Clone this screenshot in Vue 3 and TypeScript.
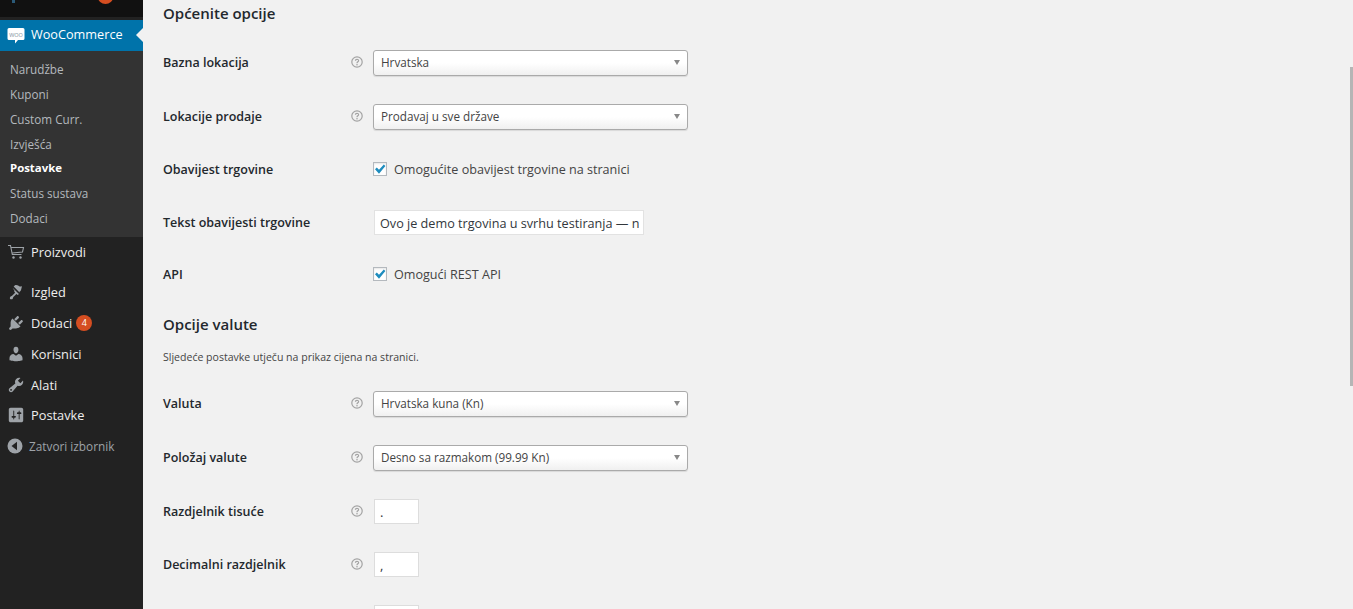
<script setup lang="ts">
interface SubItem {
  label: string;
  current?: boolean;
}

interface FieldRow {
  label: string;
  kind: 'select' | 'check' | 'text' | 'small';
  value: string;
  help?: boolean;
  height: number;
}

const subItems: SubItem[] = [
  { label: 'Narudžbe' },
  { label: 'Kuponi' },
  { label: 'Custom Curr.' },
  { label: 'Izvješća' },
  { label: 'Postavke', current: true },
  { label: 'Status sustava' },
  { label: 'Dodaci' },
];

const generalRows: FieldRow[] = [
  { label: 'Bazna lokacija', kind: 'select', value: 'Hrvatska', help: true, height: 54 },
  { label: 'Lokacije prodaje', kind: 'select', value: 'Prodavaj u sve države', help: true, height: 53 },
  { label: 'Obavijest trgovine', kind: 'check', value: 'Omogućite obavijest trgovine na stranici', height: 53 },
  { label: 'Tekst obavijesti trgovine', kind: 'text', value: 'Ovo je demo trgovina u svrhu testiranja — narudžbe neće biti izvršene.', height: 52 },
  { label: 'API', kind: 'check', value: 'Omogući REST API', height: 50 },
];

const currencyRows: FieldRow[] = [
  { label: 'Valuta', kind: 'select', value: 'Hrvatska kuna (Kn)', help: true, height: 54 },
  { label: 'Položaj valute', kind: 'select', value: 'Desno sa razmakom (99.99 Kn)', help: true, height: 54 },
  { label: 'Razdjelnik tisuće', kind: 'small', value: '.', help: true, height: 53 },
  { label: 'Decimalni razdjelnik', kind: 'small', value: ',', help: true, height: 53 },
  { label: '', kind: 'small', value: '', height: 53 },
];
</script>

<template>
  <div class="page">
    <aside class="sidebar">
      <div class="top-stub">
        <span class="stub-mark"></span>
        <span class="stub-badge"></span>
      </div>
      <div class="woo-item">
        <svg class="woo-logo" width="18" height="18" viewBox="0 0 18 18">
          <path fill="#fff" d="M2 1h14a1.500 1.500 0 0 1 1.500 1.500v9a1.500 1.500 0 0 1-1.500 1.500h-5l-3 3.500v-3.500H2a1.500 1.500 0 0 1-1.500-1.500v-9A1.500 1.500 0 0 1 2 1z" />
          <text x="9" y="9.500" text-anchor="middle" font-size="5.500" fill="#7d8f9c" font-family="'Open Sans', sans-serif">WOO</text>
        </svg>
        <span class="woo-label">WooCommerce</span>
        <span class="woo-arrow"></span>
      </div>
      <ul class="submenu">
        <li v-for="item in subItems" :key="item.label" :class="{ current: item.current }">{{ item.label }}</li>
      </ul>

      <div class="menu-item products">
        <svg class="menu-icon" width="18" height="18" viewBox="0 0 18 18">
          <path fill="none" stroke="#9ea3a8" stroke-width="1.100" d="M1 2.500h2.500l1.800 9h9.200M4 4.500h12.500l-1 4.500-10.300 1" />
          <circle cx="6.500" cy="14.500" r="1.200" fill="#9ea3a8" />
          <circle cx="13.500" cy="14.500" r="1.200" fill="#9ea3a8" />
        </svg>
        <span>Proizvodi</span>
      </div>

      <div class="menu-group">
        <div class="menu-item">
          <svg class="menu-icon" width="18" height="18" viewBox="0 0 20 20">
            <path fill="#9ea3a8" d="M14.480 11.060L7.410 3.990l1.500-1.500c.5-.56 2.300-.47 3.510.32 1.210.8 1.430 1.280 2.660 1.150 1.240-.12 1.590-.26 1.590-.26L15.590 7.700c-.03.22-.57 1.130-1.410 1.880-.83.760-.35 1.480.3 1.480zM6.210 5.190l7.070 7.070-.65.65c-.39.39-1.020.39-1.410 0l-.72-.72-3.480 3.400-.8 2.100c-.4.4-2 .6-2.800.2-.4-.4-.2-2.200.2-2.600l2-1 3.400-3.480-.71-.71c-.39-.39-.39-1.020 0-1.410z" />
          </svg>
          <span>Izgled</span>
        </div>
        <div class="menu-item">
          <svg class="menu-icon" width="18" height="18" viewBox="0 0 20 20">
            <path fill="#9ea3a8" d="M13.110 4.360L9.870 7.600 8 5.730l3.240-3.240c.35-.34 1.050-.2 1.560.32.520.51.660 1.210.31 1.550zm-8 1.770l.91-1.120 9.010 9.010-1.190.84c-.71.710-2.630 1.160-3.820 1.160H6.140L4.900 17.260c-.59.590-1.540.59-2.120 0-.59-.58-.59-1.530 0-2.120l1.240-1.240v-3.880c0-1.130.4-3.020 1.090-3.890zm7.260 3.970l3.240-3.240c.34-.35 1.040-.21 1.550.31.520.51.660 1.210.31 1.550l-3.240 3.250z" />
          </svg>
          <span>Dodaci</span>
          <span class="badge">4</span>
        </div>
        <div class="menu-item">
          <svg class="menu-icon" width="18" height="18" viewBox="0 0 20 20">
            <path fill="#9ea3a8" d="M10 9.250c-2.270 0-2.730-3.440-2.730-3.440C7 4.020 7.820 2 9.970 2c2.160 0 2.980 2.020 2.710 3.810 0 0-.41 3.440-2.680 3.440zm0 2.570L12.720 10c2.390 0 4.520 2.330 4.520 4.530v2.490s-3.650 1.130-7.240 1.130c-3.650 0-7.240-1.130-7.240-1.130v-2.490c0-2.250 1.940-4.480 4.470-4.480z" />
          </svg>
          <span>Korisnici</span>
        </div>
        <div class="menu-item">
          <svg class="menu-icon" width="18" height="18" viewBox="0 0 20 20">
            <path fill="#9ea3a8" d="M16.680 9.770c-1.340 1.340-3.300 1.670-4.950.99l-5.410 6.520c-.99.990-2.590.990-3.580 0s-.99-2.590 0-3.570l6.520-5.420c-.68-1.650-.35-3.610.99-4.950 1.280-1.280 3.120-1.620 4.720-1.060l-2.890 2.890 2.820 2.820 2.860-2.870c.53 1.580.18 3.420-1.080 4.670zM3.810 16.210c.4.390 1.030.39 1.420 0 .4-.4.400-1.030 0-1.430-.39-.39-1.020-.39-1.420 0-.4.400-.4 1.030 0 1.430z" />
          </svg>
          <span>Alati</span>
        </div>
        <div class="menu-item">
          <svg class="menu-icon" width="18" height="18" viewBox="0 0 20 20">
            <path fill="#9ea3a8" d="M18 16V4c0-1.100-.9-2-2-2H4c-1.100 0-2 .9-2 2v12c0 1.100.9 2 2 2h12c1.100 0 2-.9 2-2zM8 11h1c.55 0 1 .45 1 1s-.45 1-1 1H8v1.500c0 .28-.22.5-.5.5s-.5-.22-.5-.5V13H6c-.55 0-1-.45-1-1s.45-1 1-1h1V5.500c0-.28.22-.5.5-.5s.5.22.5.5V11zm5-2h-1c-.55 0-1-.45-1-1s.45-1 1-1h1V5.500c0-.28.22-.5.5-.5s.5.22.5.5V7h1c.55 0 1 .45 1 1s-.45 1-1 1h-1v5.500c0 .28-.22.5-.5.5s-.5-.22-.5-.5V9z" />
          </svg>
          <span>Postavke</span>
        </div>
        <div class="menu-item collapse">
          <svg class="collapse-icon" width="16" height="16" viewBox="0 0 16 16">
            <circle cx="8" cy="8" r="7.500" fill="#9ea3a8" />
            <path fill="#222" d="M10 3.800v8.400L4.500 8z" />
          </svg>
          <span>Zatvori izbornik</span>
        </div>
      </div>
    </aside>

    <main class="content">
      <h3 class="section-title first">Općenite opcije</h3>
      <div
        v-for="row in generalRows"
        :key="row.label"
        class="field-row"
        :style="{ height: row.height + 'px' }"
      >
        <label class="field-label">{{ row.label }}</label>
        <span class="help-slot">
          <svg v-if="row.help" width="12" height="12" viewBox="0 0 12 12" class="help">
            <circle cx="6" cy="6" r="5.200" fill="none" stroke="#a3a3a3" stroke-width="1.200" />
            <path fill="none" stroke="#a3a3a3" stroke-width="1.200" d="M4.400 4.800c0-2 3.200-2 3.200-.1 0 1.200-1.600 1.100-1.600 2.500" />
            <circle cx="6" cy="8.800" r=".8" fill="#a3a3a3" />
          </svg>
        </span>
        <div v-if="row.kind === 'select'" class="select">
          <span>{{ row.value }}</span>
          <i class="caret"></i>
        </div>
        <div v-else-if="row.kind === 'check'" class="check-wrap">
          <span class="check">
            <svg width="12" height="11" viewBox="0 0 12 11">
              <path fill="#1e8cbe" d="M1 5.200l1.800-1.600 2.200 2.200L9.800.6 11.400 2 5 9.800z" />
            </svg>
          </span>
          <span>{{ row.value }}</span>
        </div>
        <input v-else-if="row.kind === 'text'" class="text-input" type="text" :value="row.value" readonly />
        <input v-else class="small-input" type="text" :value="row.value" readonly />
      </div>

      <h3 class="section-title second">Opcije valute</h3>
      <p class="section-note">Sljedeće postavke utječu na prikaz cijena na stranici.</p>
      <div
        v-for="(row, index) in currencyRows"
        :key="index"
        class="field-row"
        :style="{ height: row.height + 'px' }"
      >
        <label class="field-label">{{ row.label }}</label>
        <span class="help-slot">
          <svg v-if="row.help" width="12" height="12" viewBox="0 0 12 12" class="help">
            <circle cx="6" cy="6" r="5.200" fill="none" stroke="#a3a3a3" stroke-width="1.200" />
            <path fill="none" stroke="#a3a3a3" stroke-width="1.200" d="M4.400 4.800c0-2 3.200-2 3.200-.1 0 1.200-1.600 1.100-1.600 2.500" />
            <circle cx="6" cy="8.800" r=".8" fill="#a3a3a3" />
          </svg>
        </span>
        <div v-if="row.kind === 'select'" class="select">
          <span>{{ row.value }}</span>
          <i class="caret"></i>
        </div>
        <input v-else class="small-input" type="text" :value="row.value" readonly />
      </div>
    </main>

    <div class="scroll-thumb"></div>
  </div>
</template>

<style scoped>
.page {
  display: flex;
  position: relative;
  width: 1353px;
  height: 609px;
  overflow: hidden;
  background: #f1f1f1;
  font-family: "Open Sans", "Liberation Sans", sans-serif;
  font-size: 12.800px;
  color: #444;
}

.sidebar {
  flex: 0 0 143px;
  height: 609px;
  background: #222;
  color: #eee;
}

.top-stub {
  position: relative;
  height: 20px;
  background: #222;
  box-shadow: inset 0 17px 0 #111;
}

.stub-mark {
  position: absolute;
  left: 12px;
  top: 0;
  width: 3px;
  height: 3px;
  background: #2b5a78;
}

.stub-badge {
  position: absolute;
  left: 98px;
  top: -9px;
  width: 15px;
  height: 13px;
  border-radius: 50%;
  background: #d54e21;
}

.woo-item {
  position: relative;
  display: flex;
  align-items: center;
  height: 31px;
  padding-left: 7px;
  background: #0073aa;
  color: #fff;
}

.woo-logo {
  margin-right: 6px;
}

.woo-label {
  padding-bottom: 3px;
  font-size: 12.700px;
}

.woo-arrow {
  position: absolute;
  right: 0;
  top: 8px;
  border: 7px solid transparent;
  border-right-color: #f1f1f1;
  border-left-width: 0;
}

.submenu {
  margin: 0;
  padding: 6px 0 6px;
  list-style: none;
  background: #333;
}

.submenu li {
  height: 24.860px;
  padding-left: 10px;
  font-size: 11.700px;
  line-height: 24.860px;
  color: #b4b9be;
}

.submenu li.current {
  font-size: 11.400px;
  font-weight: 700;
  color: #fff;
}

.menu-item {
  display: flex;
  align-items: center;
  height: 30.750px;
  padding-left: 7px;
  color: #eee;
}

.menu-item.products {
  height: 30px;
  margin-bottom: 10px;
}

.menu-icon {
  flex: none;
  margin-right: 6px;
}

.badge {
  width: 16px;
  height: 16px;
  margin-left: 4px;
  border-radius: 50%;
  background: #d54e21;
  font-size: 9px;
  line-height: 16px;
  text-align: center;
  color: #fff;
}

.menu-item.collapse {
  font-size: 11.800px;
  color: #9ea3a8;
}

.collapse-icon {
  margin-right: 6px;
}

.content {
  flex: 1;
  padding: 4px 0 0 20px;
  min-width: 0;
}

.section-title {
  margin: 0;
  font-size: 15px;
  font-weight: 600;
  line-height: 18px;
  color: #23282d;
}

.section-title.first {
  margin-bottom: 19px;
}

.section-title.second {
  margin-top: 12px;
}

.section-note {
  margin: 16px 0 17px;
  font-size: 10.550px;
  line-height: 16px;
  color: #444;
}

.field-row {
  display: flex;
  align-items: flex-start;
  padding-top: 9px;
  box-sizing: border-box;
}

.field-label {
  flex: 0 0 188px;
  font-size: 12.500px;
  font-weight: 600;
  line-height: 26px;
  color: #23282d;
}

.help-slot {
  flex: 0 0 22px;
  padding-top: 6px;
  line-height: 0;
}

.select {
  display: flex;
  align-items: center;
  justify-content: space-between;
  box-sizing: border-box;
  width: 315px;
  height: 26px;
  padding: 0 7px 2px 7px;
  border: 1px solid #aaa;
  border-radius: 3px;
  background: linear-gradient(#fff 50%, #f0f0f0);
  box-shadow: 0 1px 1px rgba(0, 0, 0, 0.1);
  font-size: 11.700px;
  color: #444;
}

.caret {
  border-top: 5px solid #888;
  border-left: 3px solid transparent;
  border-right: 3px solid transparent;
}

.check-wrap {
  display: flex;
  align-items: center;
  height: 24px;
  font-size: 12.600px;
  color: #444;
}

.check {
  display: flex;
  align-items: center;
  justify-content: center;
  box-sizing: border-box;
  width: 14px;
  height: 14px;
  margin: 0 7px 0 0;
  border: 1px solid #b4b9be;
  background: #fff;
  box-shadow: inset 0 1px 2px rgba(0, 0, 0, 0.1);
}

.text-input {
  box-sizing: border-box;
  width: 270px;
  height: 25px;
  margin-left: 1px;
  padding: 0 4px 0 5px;
  border: 1px solid #e2e2e2;
  background: #fff;
  font-family: inherit;
  font-size: 12.650px;
  color: #32373c;
  outline: none;
}

.small-input {
  box-sizing: border-box;
  width: 45px;
  height: 25px;
  margin-left: 1px;
  padding: 0 5px;
  border: 1px solid #ddd;
  background: #fff;
  font-family: inherit;
  font-size: 13px;
  color: #32373c;
  outline: none;
}

.scroll-thumb {
  position: absolute;
  right: 0;
  top: 67px;
  width: 3px;
  height: 319px;
  background: #b5b5b5;
}
</style>
